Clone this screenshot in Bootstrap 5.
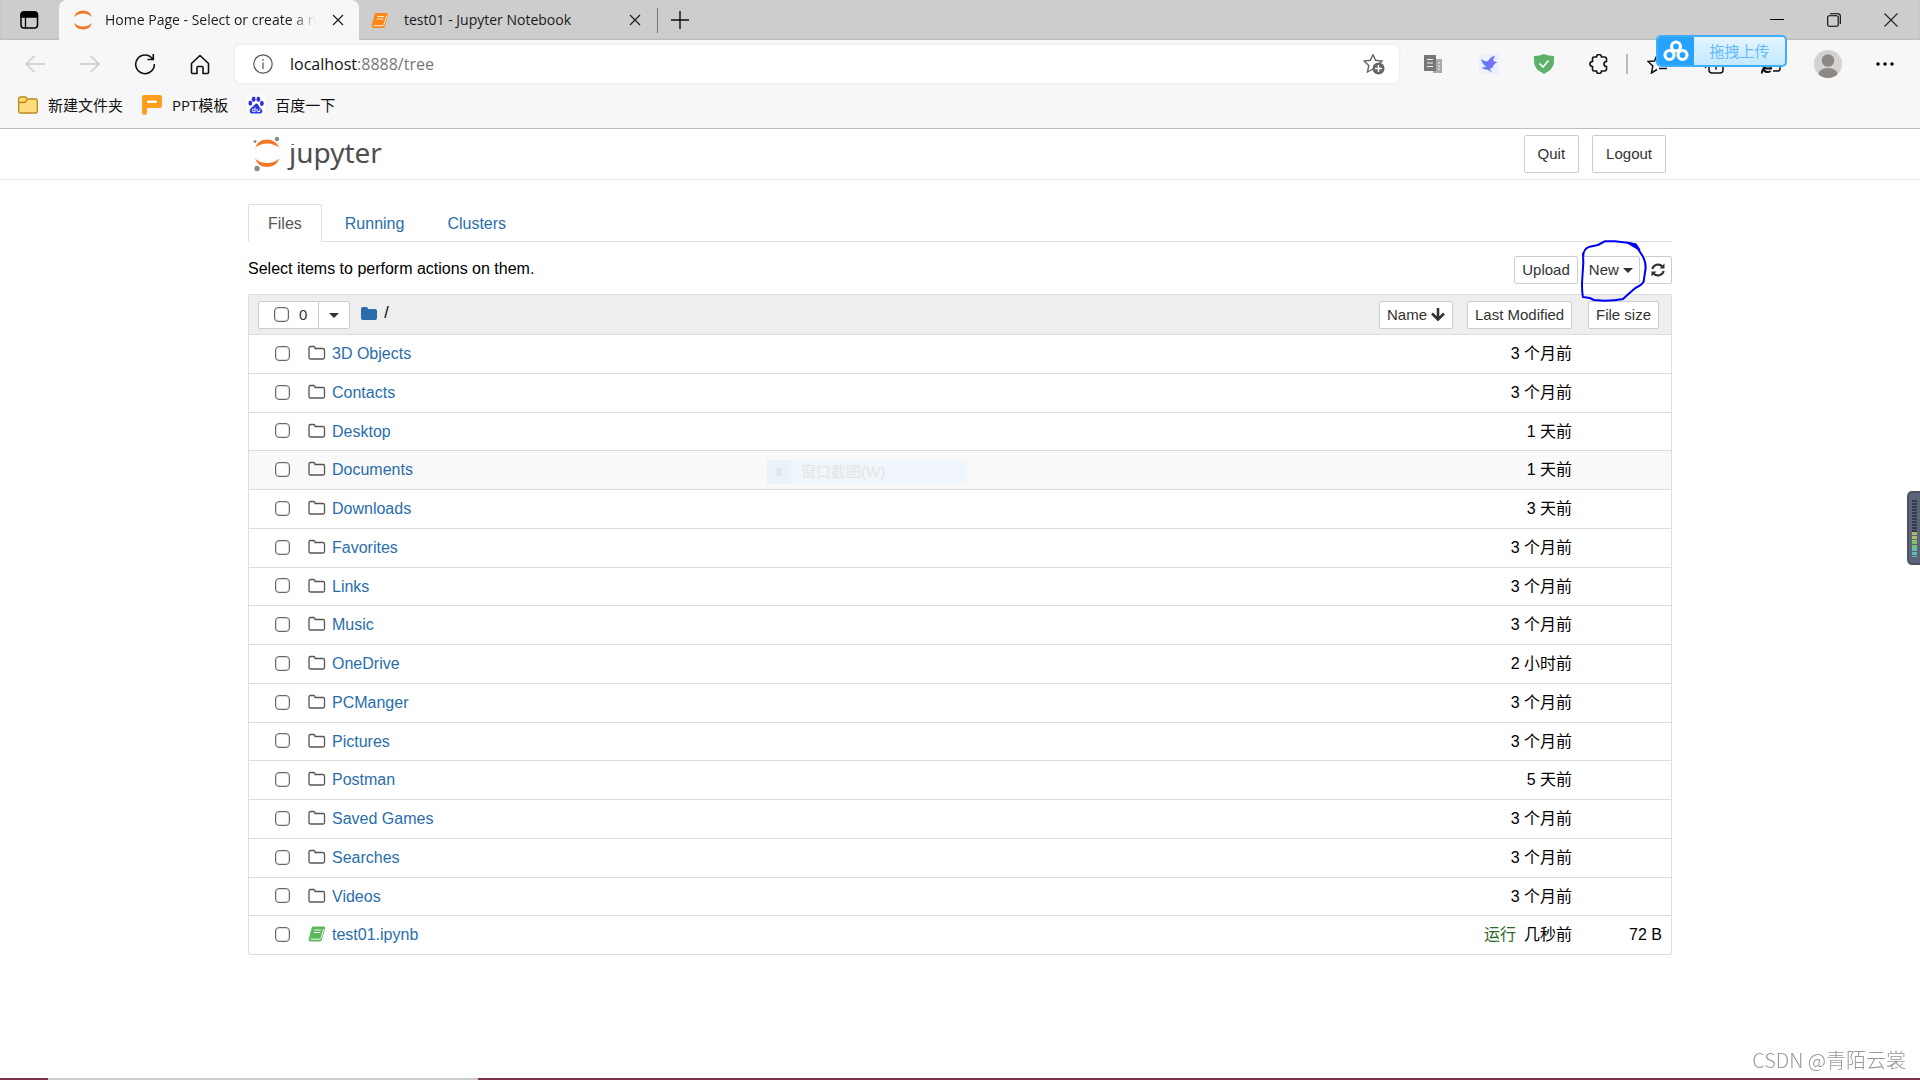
<!DOCTYPE html>
<html lang="zh-CN">
<head>
<meta charset="utf-8">
<meta name="viewport" content="width=device-width, initial-scale=1">
<title>Home Page - Select or create a notebook</title>
<link href="https://cdn.jsdelivr.net/npm/bootstrap@5.3.0/dist/css/bootstrap.min.css" rel="stylesheet">
<style>
  :root { --ui: "Open Sans", "Noto Sans CJK SC", sans-serif; --page: "Liberation Sans", "Noto Sans CJK SC", sans-serif; --line: #ddd; --link: #296eaa; }
  body { font-family: var(--page); font-size: 16px; line-height: 20px; color: #000; background: #fff; min-height: 100vh; }
  svg { display: block; flex: none; }
  button { font-family: inherit; }
  .plain { border: 0; background: none; padding: 0; color: #111; display: flex; align-items: center; justify-content: center; }
  /* browser frame */
  .browser { font-family: var(--ui); background: #f7f7f7; border-bottom: 1px solid #bdbdbd; position: relative; }
  .tabstrip { height: 40px; background: #cdcdcd; font-size: 14px; box-shadow: inset 0 -1px 2px #b8b8b8; }
  .tabstrip a { color: #1b1b1b; text-decoration: none; }
  .space-btn { width: 59px; }
  .page-tab { width: 300px; padding: 0 12px 0 14px; gap: 12px; }
  .page-tab + .page-tab { width: 298px; padding-left: 12px; gap: 11px; }
  .page-tab.current { background: #f7f7f7; border-radius: 8px 8px 0 0; }
  .page-tab a { white-space: nowrap; overflow: hidden; }
  .page-tab.current a { -webkit-mask-image: linear-gradient(90deg, #000 88%, transparent); mask-image: linear-gradient(90deg, #000 88%, transparent); }
  .page-tab.current { padding-right: 11px; }
  .tab-rule { width: 1px; height: 25px; background: #777; }
  .plus-btn { width: 44px; }
  .win-group { padding-right: 1px; }
  .win-btn { width: 57px; }
  .toolrow { height: 48px; padding: 0 7px; }
  .nav-btn { width: 55px; height: 40px; }
  .wide-btn { width: 57px; height: 40px; }
  .address { height: 38px; margin: 0 7px 0 8px; background: #fff; border-radius: 6px; box-shadow: 0 0 3px #e2e2e2; padding: 0 14px 0 18px; }
  .address input { border: 0; outline: 0; background: none; font-size: 16px; color: #777; padding: 0; min-width: 0; }
  .address .host { color: #111; font-size: 16px; padding-left: 17px; }
  .tool-rule { width: 2px; height: 20px; background: #bbb; }
  .favs { height: 40px; padding: 0 18px 6px; gap: 19px; font-size: 15px; }
  .favs a { color: #111; text-decoration: none; gap: 10px; }
  .drop-tip { position: absolute; top: 35px; right: 133px; width: 131px; height: 32px; border: 2px solid #42adff; border-radius: 5px; background: linear-gradient(#e4f5ff, #c4e9ff); color: #62baff; font-size: 15px; overflow: hidden; }
  .drop-tip .tip-logo { width: 36px; background: #26a2ff; }
  /* notebook page */
  .sheet { max-width: 1424px; margin: 0 auto; }
  .site-head { border-bottom: 1px solid #e7e7e7; }
  .site-head .sheet { height: 50px; padding: 0 6px 0 5px; }
  .quit-group { gap: 13px; }
  .brand { color: #4e4e4e; text-decoration: none; gap: 8px; }
  .brand-word { font-family: "Noto Sans", sans-serif; font-size: 28px; line-height: 36px; margin-bottom: 4px; clip-path: inset(10px -4px -4px -4px); }
  .btn-plain { --bs-btn-border-radius: 2px; --bs-btn-color: #333; --bs-btn-bg: #fff; --bs-btn-border-color: #ccc; --bs-btn-font-size: 15px; --bs-btn-line-height: 20px; --bs-btn-padding-x: 13px; --bs-btn-padding-y: 8px; --bs-btn-hover-bg: #e6e6e6; --bs-btn-hover-color: #333; }
  .btn-tight { --bs-btn-padding-x: 7px; --bs-btn-padding-y: 3px; }
  .btn-snug { --bs-btn-padding-x: 6px; }
  .btn-caret { --bs-btn-padding-x: 8px; width: 32px; }
  .caret { display: inline-block; border: 5px solid transparent; border-top-color: currentColor; border-bottom: 0; vertical-align: 2px; }
  .nav-tabs { --bs-nav-tabs-border-radius: 2px; --bs-nav-tabs-border-color: #ddd; --bs-nav-tabs-link-active-border-color: #ddd #ddd #fff; --bs-nav-tabs-link-active-color: #555; margin-top: 24px; gap: 3px; }
  .nav-tabs .nav-link { padding: 9px 19px 7px; color: var(--link); }
  .nav-tabs .nav-link.active { color: #555; }
  .actions { margin: 14px 0 10px; }
  .actions .hint { padding-bottom: 2px; }
  .ring { position: absolute; left: -2px; top: -17px; pointer-events: none; z-index: 2; }
  .files { width: 100%; border: 1px solid var(--line); border-radius: 2px; border-collapse: separate; border-spacing: 0; table-layout: fixed; }
  .files th, .files td { padding: 0; vertical-align: middle; font-weight: 400; }
  .files th { background: #eee; height: 39px; }
  .files td { border-top: 1px solid var(--line); height: 39px; }
  .files tbody tr:nth-child(4n+3) td { height: 38px; }
  .files tr.hovered td { background: #f9f9f9; }
  .files a { color: var(--link); text-decoration: none; }
  .col-date { width: 109px; }
  .col-size { width: 95px; }
  .files .date { text-align: right; padding-right: 4px; white-space: nowrap; }
  .files .size { text-align: right; padding-right: 9px; }
  .files .by-name { margin-right: 14px; }
  .files .by-size { margin-left: 12px; }
  .running { color: #2b6a2b; margin-right: 8px; }
  .tick { appearance: none; width: 15px; height: 15px; border: 1px solid #666; border-radius: 4px; background: #fff; box-shadow: inset 0 0 0 1px #ddd; margin: 0; flex: none; }
  .files .entry { padding-left: 26px; }
  .entry .tick { margin: 0 18px 2px 0; }
  .entry svg { margin-bottom: 2px; }
  .entry a { margin-left: 6px; }
  .pick { padding: 0 11px 0 7px; }
  .pick .tick { margin: 0 10px 0 8px; }
  .pick-group { margin-left: 9px; }
  .root-link { margin: 0 7px 3px 11px; }
  .ghost { position: absolute; left: 518px; top: 0; width: 200px; height: 24px; background: #f0f6fb; color: #e4e4e4; font-size: 15px; }
  .ghost i { width: 24px; height: 24px; background: #eaf3fb; margin-right: 10px; padding: 8px; }
  .ghost i::before { content: ""; display: block; width: 8px; height: 8px; border-radius: 50%; background: #e6e6e6; }
  .meter { position: fixed; right: 0; top: 491px; }
  .credit { position: fixed; right: 14px; bottom: 7px; font: 300 20px/26px "Noto Sans CJK SC", sans-serif; color: #999; }
  .edge { position: fixed; left: 0; right: 0; bottom: 0; height: 2px; background: linear-gradient(90deg, #7a3348 48px, #ccc 48px, #ccc 478px, #7a3348 478px); }
</style>
</head>
<body>
<svg width="0" height="0" class="position-absolute" aria-hidden="true">
  <symbol id="folder" viewBox="0 0 18 16"><path d="M1 3Q1 1.500 2.500 1.500H5.500Q7 1.500 7 3V3.500H15Q16.500 3.500 16.500 5V12.500Q16.500 14 15 14H2.500Q1 14 1 12.500Z" fill="none" stroke="#555" stroke-width="1.300"/></symbol>
  <symbol id="book" viewBox="0 0 18 16"><path d="M5 .5H15.500Q17.500 .6 17 2.500L14 13.500Q13.500 15.500 11.500 15.500H2Q.2 15 .8 12.500L3.500 2.500Q4 .5 5 .5Z" fill="currentColor"/><path d="M6.500 4H13M5.800 6.500H12.300M2.500 13.200H11.500Q12.800 13 13.200 11.500L15.700 3" fill="none" stroke="#fff" stroke-width=".9"/></symbol>
  <symbol id="cross" viewBox="0 0 12 12"><path d="M1 1L11 11M11 1L1 11" stroke="#222" stroke-width="1.300"/></symbol>
</svg>

<header class="browser">
  <div class="tabstrip d-flex align-items-center">
    <button class="plain space-btn h-100" aria-label="Tab actions"><svg width="19" height="18" viewBox="0 0 19 18"><rect x="1" y="1" width="16.500" height="16" rx="3" fill="none" stroke="#000" stroke-width="1.500"/><path d="M1 6V4Q1 1 4 1H14.500Q17.500 1 17.500 4V6ZM5.500 6V17" stroke="#000" stroke-width="1.300"/></svg></button>
    <div class="page-tab current d-flex align-items-center h-100">
      <svg width="20" height="20" viewBox="0 0 20 20" fill="#f37726"><path d="M1 7Q3 .5 10 .5T19 7Q15 3.500 10 3.500T1 7ZM1 13Q3 19.500 10 19.500T19 13Q15 16.500 10 16.500T1 13Z"/></svg>
      <a href="#" class="flex-grow-1">Home Page - Select or create a notebook</a>
      <button class="plain px-1" aria-label="Close tab"><svg width="12" height="12"><use href="#cross"/></svg></button>
    </div>
    <div class="page-tab d-flex align-items-center h-100">
      <svg width="18" height="17" style="color:#ff8615"><use href="#book"/></svg>
      <a href="#" class="flex-grow-1 ps-1">test01 - Jupyter Notebook</a>
      <button class="plain px-1" aria-label="Close tab"><svg width="12" height="12"><use href="#cross"/></svg></button>
    </div>
    <span class="tab-rule"></span>
    <button class="plain plus-btn" aria-label="New tab"><svg width="18" height="18"><path d="M9 0V18M0 9H18" stroke="#111" stroke-width="1.400"/></svg></button>
    <div class="win-group ms-auto d-flex h-100">
      <button class="plain win-btn" aria-label="Minimize"><svg width="14" height="14"><path d="M0 6.500H14" stroke="#000"/></svg></button>
      <button class="plain win-btn" aria-label="Restore"><svg width="14" height="14" fill="none" stroke="#000" stroke-width="1.100"><rect x=".7" y="2.700" width="10.500" height="10.500" rx="1.500"/><path d="M3 .7H11Q13.300 .7 13.300 3V11"/></svg></button>
      <button class="plain win-btn" aria-label="Close"><svg width="14" height="14"><path d="M.5 .5L13.500 13.500M13.500 .5L.5 13.500" stroke="#222" stroke-width="1.100"/></svg></button>
    </div>
  </div>

  <div class="toolrow d-flex align-items-center">
    <button class="plain nav-btn" aria-label="Back"><svg width="20" height="18" fill="none" stroke="#c9c9c9" stroke-width="1.400"><path d="M9.500 .7L1 9L9.500 17.300M1 9H20"/></svg></button>
    <button class="plain nav-btn" aria-label="Forward"><svg width="20" height="18" fill="none" stroke="#c9c9c9" stroke-width="1.400"><path d="M10.500 .7L19 9L10.500 17.300M19 9H0"/></svg></button>
    <button class="plain nav-btn" aria-label="Reload"><svg width="22" height="22" fill="none" stroke="#111" stroke-width="1.600"><path d="M18.600 6A9.300 9.300 0 1 0 20.300 11M19.300 1V6.500H13.500"/></svg></button>
    <button class="plain nav-btn" aria-label="Home"><svg width="20" height="21" fill="none" stroke="#111" stroke-width="1.600" stroke-linejoin="round"><path d="M1.500 9.500L10 1.500L18.500 9.500V18.500Q18.500 19.500 17.500 19.500H13V13.500Q13 12.500 12 12.500H8Q7 12.500 7 13.500V19.500H2.500Q1.500 19.500 1.500 18.500Z"/></svg></button>
    <form class="address flex-grow-1 d-flex align-items-center">
      <svg width="20" height="20" fill="none" stroke="#555" stroke-width="1.200"><circle cx="10" cy="10" r="9.200"/><path d="M10 8.500V15M10 5V6.800"/></svg>
      <label for="url" class="host">localhost</label>
      <input id="url" class="flex-grow-1" value=":8888/tree">
      <svg width="22" height="22" viewBox="0 0 22 22"><path d="M10 1.500L12.600 7.300L19 8L14.500 12.500M10 1.500L7.400 7.300L1 8L5.800 12.500L4.500 19L10 16" fill="none" stroke="#666" stroke-width="1.400"/><circle cx="15.500" cy="15.500" r="6" fill="#666"/><path d="M15.500 12V19M12 15.500H19" stroke="#fff" stroke-width="1.400"/></svg>
    </form>
    <button class="plain nav-btn" aria-label="Reader extension"><svg width="19" height="19"><path d="M9 4H18V18H9Z" fill="#aaa"/><path d="M0 0H12V16H0Z" fill="#777"/><path d="M3 4.500H9M3 8H9M3 11.500H9M14 8H16M14 11H16M14 14H16" stroke="#f2f2f2" stroke-width="1.200"/></svg></button>
    <button class="plain nav-btn" aria-label="Bird extension"><svg width="20" height="20"><defs><linearGradient id="wing"><stop stop-color="#4b84ff"/><stop offset="1" stop-color="#9268f0"/></linearGradient></defs><rect width="20" height="20" rx="2" fill="#eaf1fd"/><path d="M2 5Q6 8 9 7Q11 3 16 1.500Q14 5 14.500 7L18.500 8.500Q15 9.500 14.500 12Q13 15 10.500 15L13.500 18.500L8 15.500Q4 15.500 3 13.500Q6 13.500 7 12.500Q3 10 2 5Z" fill="url(#wing)"/></svg></button>
    <button class="plain nav-btn" aria-label="Shield extension"><svg width="20" height="20"><path d="M10 0Q14 2 20 2V8Q20 15 10 20Q0 15 0 8V2Q6 2 10 0Z" fill="#5cb26a"/><path d="M5.500 9.500L9 13L14.500 6.500" fill="none" stroke="#fff" stroke-width="1.600"/></svg></button>
    <button class="plain nav-btn" aria-label="Extensions"><svg width="20" height="20" fill="none" stroke="#111" stroke-width="1.600"><path d="M5 3H7.500A2.500 2.500 0 0 1 12.500 3H15.500Q17.500 3 17.500 5V7.500A2.500 2.500 0 0 0 17.500 12.500V15Q17.500 17 15.500 17H12.500A2.500 2.500 0 0 1 7.500 17H5Q3.500 17 3.500 15.500V12.500A2.500 2.500 0 0 1 3.500 7.500V4.500Q3.500 3 5 3Z"/></svg></button>
    <span class="tool-rule"></span>
    <button class="plain wide-btn" aria-label="Favorites"><svg width="20" height="20" fill="none" stroke="#111" stroke-width="1.500"><path d="M10 1L7.500 7L1 7.500L5.800 12L4.500 19L10 15.500M10 1L12.500 7H19M12 10.500H20M12 14.500H20"/></svg></button>
    <button class="plain wide-btn" aria-label="Collections"><svg width="20" height="20" fill="none" stroke="#111" stroke-width="1.500"><rect x="5" y="5" width="14" height="14" rx="3"/><path d="M2 14Q1 13 1 11V4Q1 1 4 1H11Q14 1 14 3M12 8.500V15.500M8.500 12H15.500"/></svg></button>
    <button class="plain wide-btn" aria-label="Internet Explorer mode"><svg width="20" height="20" fill="none" stroke="#111"><path d="M6 6V4Q6 1 9 1H16Q19 1 19 4V15Q19 17 16 17H12" stroke-width="1.500"/><path d="M2.500 14.500H10Q9.500 10.500 6.500 10.500T2.500 14.500Q3 18 6.500 18Q8.500 18 9.500 16.800M1 19.500Q0 17 5 12" stroke-width="2"/></svg></button>
    <button class="plain wide-btn" aria-label="Profile"><svg width="28" height="28"><clipPath id="face"><circle cx="14" cy="14" r="14"/></clipPath><g clip-path="url(#face)"><rect width="28" height="28" fill="#d5d3d1"/><circle cx="14" cy="10.500" r="6.300" fill="#8e8884"/><ellipse cx="14" cy="25" rx="10" ry="7" fill="#8e8884"/></g></svg></button>
    <button class="plain wide-btn" aria-label="Settings and more"><svg width="18" height="4"><circle cx="2" cy="2" r="1.700"/><circle cx="9" cy="2" r="1.700"/><circle cx="16" cy="2" r="1.700"/></svg></button>
  </div>

  <nav class="favs d-flex align-items-center">
    <a href="#" class="d-flex align-items-center"><svg width="20" height="18" fill="#ffdc7c" stroke="#b98b16" stroke-width="1.300"><path d="M.7 3Q.7 1 2.700 1H7Q8.500 1 9 3H17.500Q19.300 3 19.300 5V15Q19.300 17 17.300 17H2.700Q.7 17 .7 15Z"/><path d="M1 6.500H6.500Q8.500 6.500 9 3" fill="#ffcf45"/></svg>新建文件夹</a>
    <a href="#" class="d-flex align-items-center"><svg width="20" height="20" fill="#ff9d1e"><path fill-rule="evenodd" d="M2 0H18Q20 0 20 3V10Q20 13 18 13H5V17Q5 20 2.500 20T0 17V2Q0 0 2 0ZM5 5.500V8H14Q15 8 15 6.700T14 5.500Z"/></svg>PPT模板</a>
    <a href="#" class="d-flex align-items-center"><svg width="18" height="20" viewBox="0 0 19 20" fill="#2932e1"><rect width="19" height="20" fill="#fff"/><ellipse cx="3.500" cy="8" rx="2" ry="2.700"/><ellipse cx="7" cy="3.800" rx="2" ry="2.800"/><ellipse cx="12" cy="3.800" rx="2" ry="2.800"/><ellipse cx="15.700" cy="8.300" rx="2" ry="2.700"/><path d="M9.500 8.500Q11.500 8.500 12.500 11T16 15Q17 19.500 12 19H7Q2 19.500 3 15Q3.500 13.500 5.500 12T9.500 8.500Z"/><path d="M8.500 12.500V17H6.500Q5.500 17 5.500 15.700T6.500 14.500H8.500M10.500 14V16.500Q11 17 13.500 17V14" stroke="#fff" fill="none"/></svg>百度一下</a>
  </nav>

  <div class="drop-tip d-flex">
    <span class="tip-logo d-flex align-items-center justify-content-center"><svg width="26" height="22" fill="none" stroke="#fff" stroke-width="3.200"><circle cx="13" cy="6.500" r="4.500"/><circle cx="6.500" cy="15" r="4.500"/><circle cx="19.500" cy="15" r="4.500"/></svg></span>
    <span class="flex-grow-1 d-flex align-items-center justify-content-center">拖拽上传</span>
  </div>
</header>

<div class="site-head">
  <div class="sheet d-flex align-items-center justify-content-between">
    <a href="#" class="brand d-flex align-items-center">
      <svg width="28" height="36" viewBox="0 0 28 36"><path d="M2 12Q5 3.500 14 3.500T26.500 12Q21 7.500 14 7.500T2 12ZM2 22.500Q5 31 14 31T26.500 22.500Q21 27 14 27T2 22.500Z" fill="#f37726"/><g fill="#8a8a8a"><circle cx="2" cy="5.500" r="1.500"/><circle cx="24" cy="3" r="2.200"/><circle cx="4" cy="32.500" r="2.700"/></g></svg>
      <span class="brand-word">jupyter</span>
    </a>
    <div class="quit-group d-flex">
      <button class="btn btn-plain">Quit</button>
      <button class="btn btn-plain">Logout</button>
    </div>
  </div>
</div>

<main class="sheet">
  <ul class="nav nav-tabs">
    <li class="nav-item"><a class="nav-link active" href="#">Files</a></li>
    <li class="nav-item"><a class="nav-link" href="#">Running</a></li>
    <li class="nav-item"><a class="nav-link" href="#">Clusters</a></li>
  </ul>

  <div class="actions d-flex justify-content-between align-items-center">
    <span class="hint">Select items to perform actions on them.</span>
    <div class="d-flex gap-1">
      <button class="btn btn-plain btn-tight">Upload</button>
      <div class="position-relative">
        <button class="btn btn-plain btn-tight btn-snug">New <span class="caret"></span></button>
        <svg class="ring" width="68" height="64" viewBox="296 358 204 192" fill="none" stroke="#0000f5" stroke-width="6" stroke-linejoin="round"><path d="M306 410Q305 388 325 381L350 376L370 365L400 365L440 369L462 375L485 411Q494 430 493 445L487 485Q483 495 462 505L438 526L425 538Q400 543 370 543L338 541L325 535L305 532Q302 520 302 490L306 430L305 400"/><path d="M440 370L463 374L474 390Z" fill="#0000f5"/></svg>
      </div>
      <button class="btn btn-plain btn-tight btn-snug d-flex align-items-center" aria-label="Refresh"><svg width="14" height="14" fill="none" stroke="#333" stroke-width="2.200"><path d="M1.300 6A6 6 0 0 1 11.500 3.500M12.700 8A6 6 0 0 1 2.500 10.500"/><path d="M13.500 .5V5.500H8.500ZM.5 13.500V8.500H5.500Z" fill="#333" stroke="none"/></svg></button>
    </div>
  </div>

  <table class="files">
    <colgroup><col><col class="col-date"><col class="col-size"></colgroup>
    <thead>
      <tr>
        <th scope="col"><div class="d-flex align-items-center">
          <div class="btn-group pick-group">
            <label class="btn btn-plain btn-tight d-flex align-items-center pick"><input type="checkbox" class="tick">0</label>
            <button class="btn btn-plain btn-tight btn-caret" aria-label="Select menu"><span class="caret"></span></button>
          </div>
          <a href="#" class="root-link" aria-label="Root folder"><svg width="16" height="13" fill="#296eaa"><path d="M0 2Q0 0 2 0H5Q7 0 7 2H14Q16 2 16 4V11Q16 13 14 13H2Q0 13 0 11Z"/></svg></a>
          <span class="pb-1">/</span>
          <button class="btn btn-plain btn-tight by-name ms-auto d-flex align-items-center gap-1">Name <svg width="14" height="13" fill="none" stroke="#333" stroke-width="2.600"><path d="M7 0V11M1 5.500L7 11.500L13 5.500"/></svg></button>
        </div></th>
        <th scope="col"><button class="btn btn-plain btn-tight">Last Modified</button></th>
        <th scope="col"><button class="btn btn-plain btn-tight by-size">File size</button></th>
      </tr>
    </thead>
    <tbody id="rows"></tbody>
  </table>
</main>

<svg class="meter" width="13" height="74"><path d="M13 0H4Q0 1 0 6V68Q0 73 4 74H13Z" fill="#4c5164"/><path d="M13 2H5Q2 3 2 7V67Q2 71 5 72H13Z" fill="#5d6378"/><g fill="none" stroke-width="5"><path d="M7.500 9V41" stroke="#353a4a" stroke-dasharray="2 1"/><path d="M7.500 41V50" stroke="#a9bf62" stroke-dasharray="3 1"/><path d="M7.500 50V57" stroke="#7fc070" stroke-dasharray="3 1"/><path d="M7.500 57V66" stroke="#5cc0a8" stroke-dasharray="3 1"/></g></svg>
<div class="credit">CSDN @青陌云裳</div>
<div class="edge"></div>

<script>
  const entries = [
    ["3D Objects", "3 个月前"], ["Contacts", "3 个月前"], ["Desktop", "1 天前"], ["Documents", "1 天前"],
    ["Downloads", "3 天前"], ["Favorites", "3 个月前"], ["Links", "3 个月前"], ["Music", "3 个月前"],
    ["OneDrive", "2 小时前"], ["PCManger", "3 个月前"], ["Pictures", "3 个月前"], ["Postman", "5 天前"],
    ["Saved Games", "3 个月前"], ["Searches", "3 个月前"], ["Videos", "3 个月前"], ["test01.ipynb", "几秒前", "72 B"]
  ];
  document.getElementById("rows").innerHTML = entries.map(([name, date, size]) => `
    <tr class="${name === "Documents" ? "hovered" : ""}">
      <td><div class="entry d-flex align-items-center position-relative">
        <input type="checkbox" class="tick" aria-label="${name}">
        <svg width="18" height="16" style="color:#5cb85c"><use href="#${size ? "book" : "folder"}"/></svg>
        <a href="#">${name}</a>
        ${name === "Documents" ? '<div class="ghost d-flex align-items-center"><i></i>窗口截图(W)</div>' : ""}
      </div></td>
      <td class="date">${size ? '<span class="running">运行</span>' : ""}${date}</td>
      <td class="size">${size || ""}</td>
    </tr>`).join("");
</script>
<script src="https://cdn.jsdelivr.net/npm/bootstrap@5.3.0/dist/js/bootstrap.bundle.min.js"></script>
</body>
</html>
